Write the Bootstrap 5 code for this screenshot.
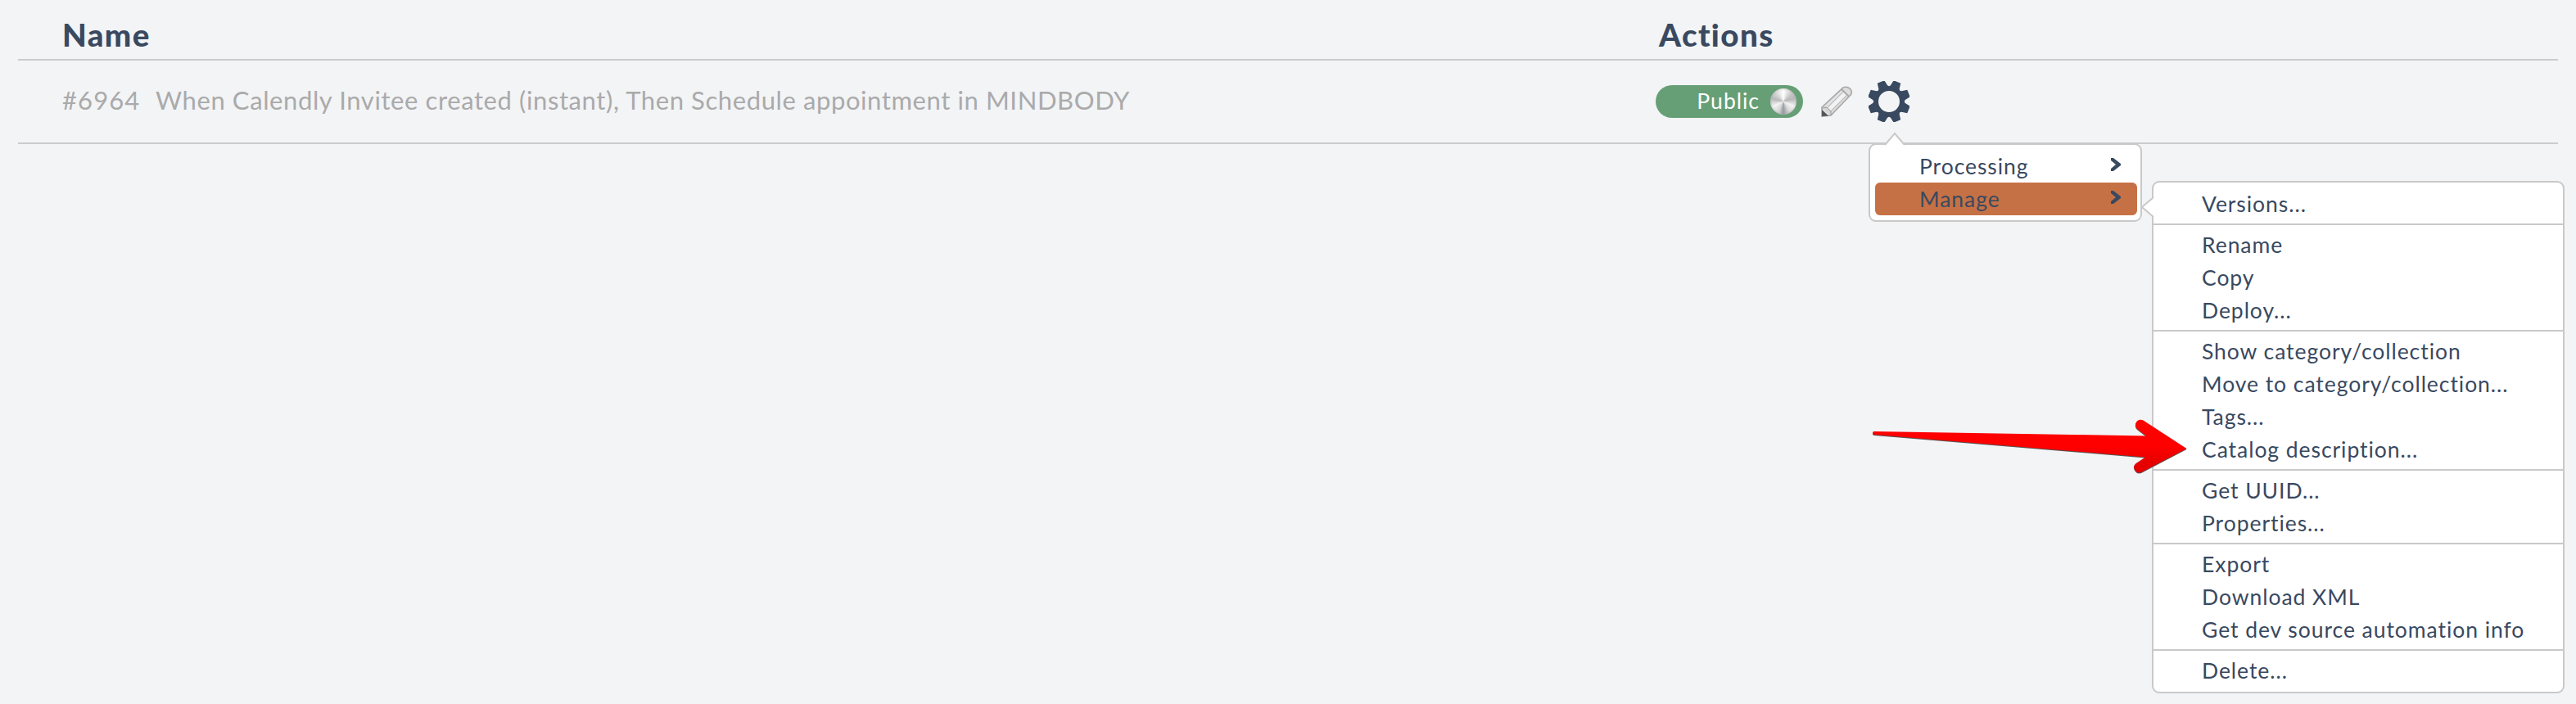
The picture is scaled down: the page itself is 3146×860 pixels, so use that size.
<!DOCTYPE html>
<html lang="en">
<head>
  <meta charset="UTF-8" />
  <meta name="viewport" content="width=device-width, initial-scale=1" />
  <title>Automations</title>
  <link href="https://cdn.jsdelivr.net/npm/bootstrap@5.3.0/dist/css/bootstrap.min.css" rel="stylesheet">
  <style>
    body {
      background-color: #f3f4f6;
      color: #394960;
      font-family: Lato, "Liberation Sans", sans-serif;
      min-height: 860px;
    }
    .automations {
      margin: 0 22px;
    }
    .list-head, .list-line {
      border-bottom: 2px solid #cacbcd;
      padding-left: 54px;
    }
    .list-head {
      height: 74px;
      font-size: 38.5px;
      font-weight: 900;
      line-height: 45px;
      padding-top: 20px;
      letter-spacing: 1.4px;
    }
    .list-line {
      height: 102px;
      color: #aaa;
      font-size: 31px;
      letter-spacing: .6px;
    }
    .name-cell {
      width: 1946px;
      flex: none;
    }
    .list-line .name-cell {
      padding-bottom: 3px;
    }
    .name-cell .number {
      display: inline-block;
      width: 114px;
      letter-spacing: 1.1px;
    }
    .toggle-pill {
      width: 180px;
      height: 40px;
      background-color: #669f76;
      color: #fff;
      font-size: 26.5px;
      letter-spacing: 1px;
      padding-right: 8px;
      gap: 13px;
    }
    .toggle-knob {
      width: 32px;
      height: 32px;
      border-radius: 50%;
      background: conic-gradient(#fff, #c4c4c4 50deg, #b8b8b8 75deg, #f4f4f4 115deg, #d8d8d8 150deg, #939ba0 180deg, #d5d5d5 205deg, #f4f4f4 245deg, #b8b8b8 285deg, #d0d0d0 310deg, #fff);
      box-shadow: inset 0 0 3px #aaa;
    }
    .pencil {
      margin-left: 22px;
    }
    .gear-holder {
      margin-left: 20px;
      width: 50px;
      height: 50px;
    }
    .gear-holder svg {
      display: block;
    }
    .action-menu {
      --bs-dropdown-padding-y: 6px;
      --bs-dropdown-border-width: 2px;
      --bs-dropdown-border-color: #c9c9c9;
      --bs-dropdown-border-radius: 9px;
      --bs-dropdown-font-size: 26.5px;
      --bs-dropdown-bg: #fff;
      --bs-dropdown-link-color: #394960;
      --bs-dropdown-item-padding-x: 54px;
      --bs-dropdown-item-padding-y: 0;
      width: 334px;
      padding-left: 6px;
      padding-right: 4px;
      top: 76px;
      left: 0;
    }
    .action-menu .dropdown-item {
      height: 40px;
      line-height: 41px;
      border-radius: 6px;
      padding-right: 20px;
      letter-spacing: .95px;
    }
    .action-menu .dropdown-item.current {
      background-color: #c67145;
    }
    .action-menu .sub-menu {
      width: 504px;
      top: -2px;
      left: 338px;
      padding-left: 0;
      padding-right: 0;
      --bs-dropdown-item-padding-x: 59px;
    }
    .sub-menu .dropdown-divider {
      margin: 4px 0;
      border-top: 2px solid #c9c9c9;
      opacity: 1;
    }
    .caret-up, .caret-left {
      position: absolute;
    }
    .caret-up {
      left: 17px;
      top: -16px;
    }
    .caret-left {
      left: -16px;
      top: 17px;
    }
    .chevron {
      flex: none;
      margin-top: 10px;
    }
    .pointer-arrow {
      position: absolute;
      left: 2280px;
      top: 505px;
      z-index: 1100;
      filter: drop-shadow(0 1px .5px #555);
    }
  </style>
</head>
<body>

<div class="automations">
  <div class="list-head d-flex">
    <div class="name-cell">Name</div>
    <div class="ps-1">Actions</div>
  </div>
  <div class="list-line d-flex align-items-center">
    <div class="name-cell text-nowrap"><span class="number">#6964</span><span class="title">When Calendly Invitee created (instant), Then Schedule appointment in MINDBODY</span></div>
    <div class="toggle-pill rounded-pill d-flex align-items-center justify-content-end">
      <span>Public</span>
      <span class="toggle-knob"></span>
    </div>
    <svg class="pencil" width="38" height="38" viewBox="0 0 38 38">
      <path d="M1 37V26L27 2Q31 0 35 3Q39 7 36 11L12 36Z" fill="#dedede" stroke="#a6a6a6" stroke-width="1.6"/>
      <path d="M7 25L26 6L32 12L13 31Z" fill="#f2f2f2"/>
      <path d="M8 26L27 7M12 31L31 12" stroke="#bbb" stroke-width="1.3"/>
      <path d="M25 4L34 13" stroke="#aaa" stroke-width="2"/>
      <path d="M2 27L7 26L12 31V36" fill="#d4d4d4" stroke="#999"/>
      <path d="M1 37V29L9 36.500Z" fill="#555"/>
    </svg>
    <div class="gear-holder position-relative">
      <svg width="50" height="50" viewBox="0 0 50 50">
        <defs><path id="tooth" d="M16 -8L19 -5.800L26 -4.600V4.600L19 5.800L16 8Z"/></defs>
        <circle cx="25" cy="25" r="15.800" fill="none" stroke="#394960" stroke-width="5.600"/>
        <g id="teeth" fill="#394960" transform="translate(25 25)"></g>
      </svg>
      <div class="dropdown-menu action-menu show">
        <svg class="caret-up" width="26" height="18" viewBox="0 0 26 18"><path d="M1 18V16L13 2L25 16V18Z" fill="#fff"/><path d="M1 16L13 2L25 16" fill="none" stroke="#c9c9c9" stroke-width="2"/></svg>
        <a class="dropdown-item d-flex justify-content-between" href="#"><span>Processing</span>
          <svg class="chevron" width="12" height="16" viewBox="0 0 12 16"><path d="M0 0H3L12 7V9L3 16H0V13L6 8L0 3Z" fill="#394960"/></svg></a>
        <div class="position-relative">
          <a class="dropdown-item current d-flex justify-content-between" href="#"><span>Manage</span>
            <svg class="chevron" width="12" height="16" viewBox="0 0 12 16"><path d="M0 0H3L12 7V9L3 16H0V13L6 8L0 3Z" fill="#394960"/></svg></a>
          <div class="dropdown-menu action-menu sub-menu show" id="manageMenu">
            <svg class="caret-left" width="18" height="26" viewBox="0 0 18 26"><path d="M18 1H16L2 13L16 25H18Z" fill="#fff"/><path d="M16 1L2 13L16 25" fill="none" stroke="#c9c9c9" stroke-width="2"/></svg>
          </div>
        </div>
      </div>
    </div>
  </div>
</div>

<svg class="pointer-arrow" width="400" height="84" viewBox="0 0 400 84">
  <defs>
    <linearGradient id="red" x1="0" y1="0" x2="0" y2="1">
      <stop offset=".5" stop-color="#f00"/>
      <stop offset=".8" stop-color="#e60000"/>
    </linearGradient>
  </defs>
  <path d="M9 22L341 27.500L330 19A6.500 6.500 0 0 1 337.500 8.500L390.500 43L335 72A6.500 6.500 0 0 1 328 61.500L340 53.500L9 26A2 2 0 0 1 9 22Z" fill="url(#red)"/>
</svg>

<script src="https://cdn.jsdelivr.net/npm/bootstrap@5.3.0/dist/js/bootstrap.bundle.min.js"></script>
<script>
  const groups = [
    ['Versions...'],
    ['Rename', 'Copy', 'Deploy...'],
    ['Show category/collection', 'Move to category/collection...', 'Tags...', 'Catalog description...'],
    ['Get UUID...', 'Properties...'],
    ['Export', 'Download XML', 'Get dev source automation info'],
    ['Delete...']
  ];
  const menu = document.getElementById('manageMenu');
  groups.forEach((items, i) => {
    if (i > 0) menu.insertAdjacentHTML('beforeend', '<hr class="dropdown-divider">');
    items.forEach(text => {
      menu.insertAdjacentHTML('beforeend', `<a class="dropdown-item" href="#">${text}</a>`);
    });
  });

  // Eight teeth around the gear
  let teeth = '';
  for (let i = 0; i < 8; i++) {
    teeth += `<use href="#tooth" transform="rotate(${22.5 + i * 45})"/>`;
  }
  document.getElementById('teeth').innerHTML = teeth;
</script>

</body>
</html>
